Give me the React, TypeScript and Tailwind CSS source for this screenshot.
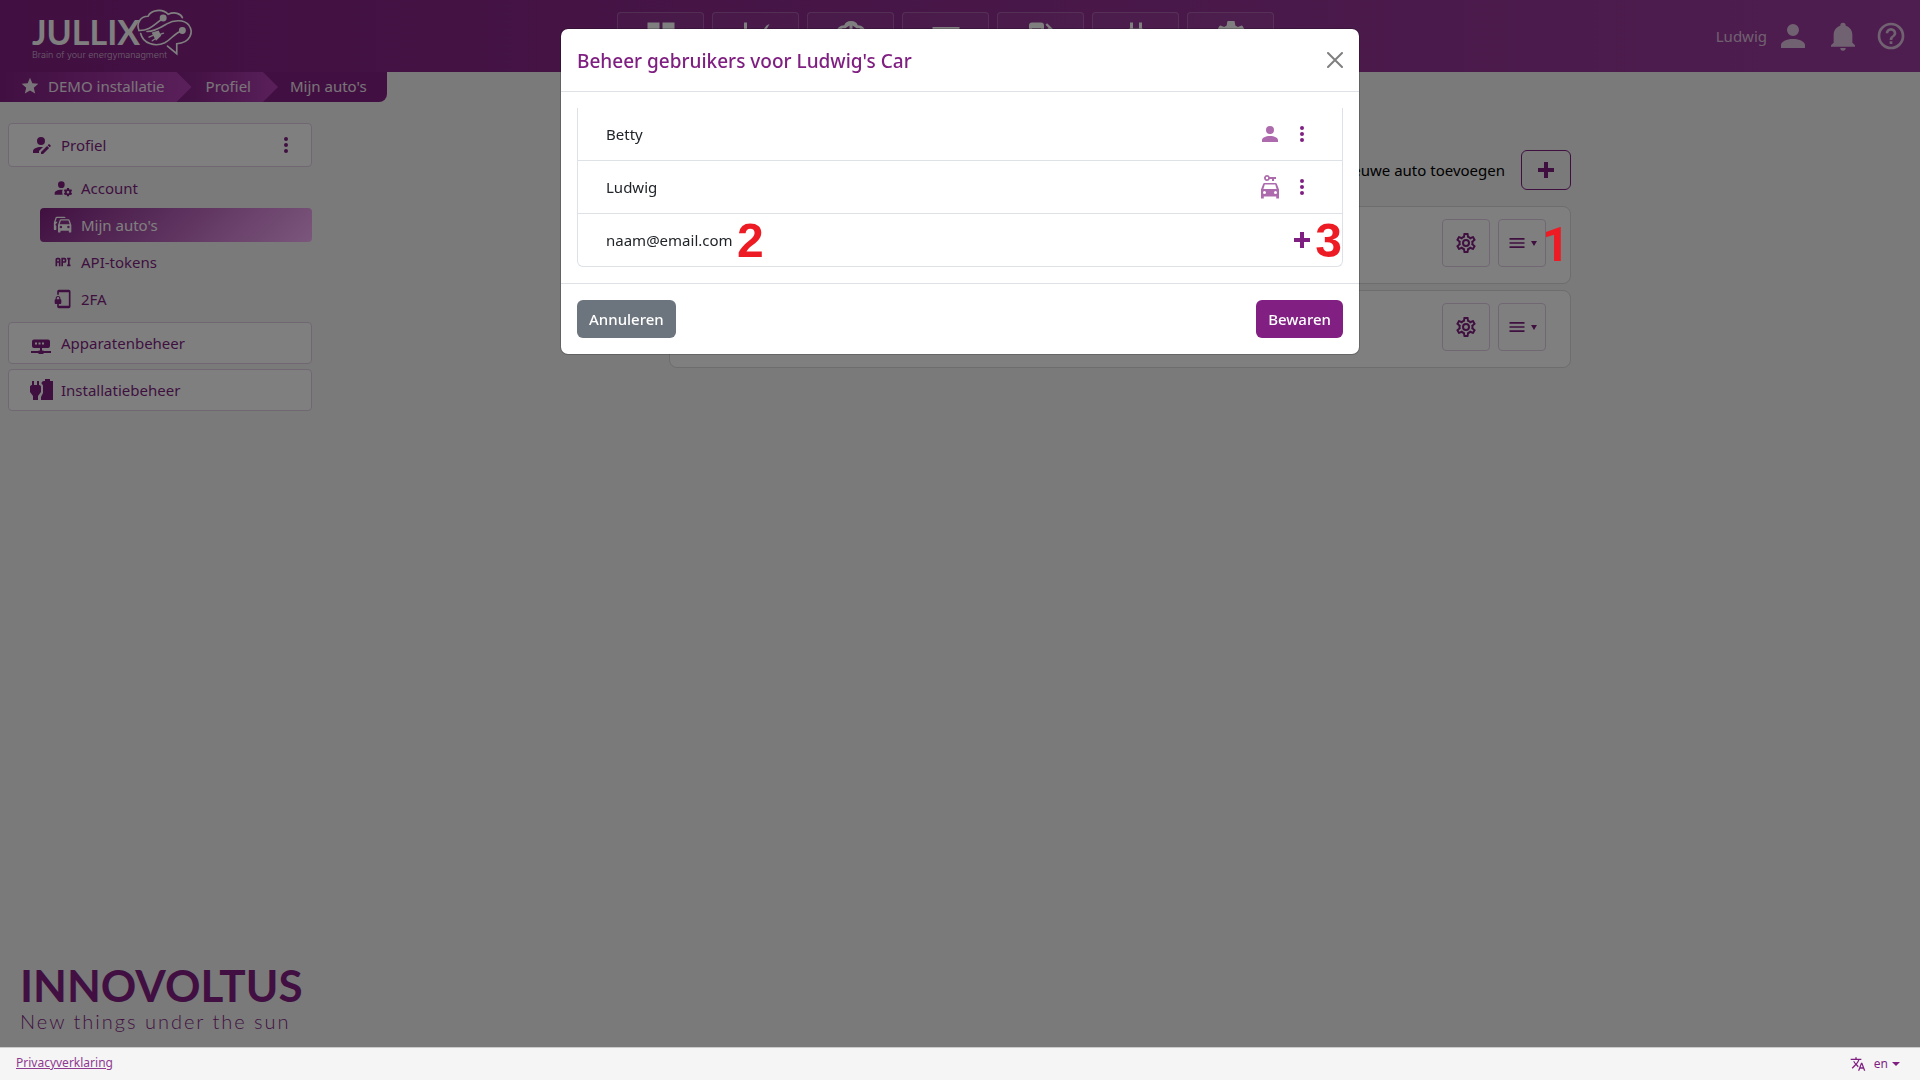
import type { ReactNode } from "react";
import { MdTranslate, MdStar } from "react-icons/md";

const paths = {
  account:
    "M12,4A4,4 0 0,1 16,8A4,4 0 0,1 12,12A4,4 0 0,1 8,8A4,4 0 0,1 12,4M12,14C16.42,14 20,15.79 20,18V20H4V18C4,15.79 7.58,14 12,14Z",
  bell: "M21,19V20H3V19L5,17V11C5,7.9 7.03,5.17 10,4.29C10,4.19 10,4.1 10,4A2,2 0 0,1 12,2A2,2 0 0,1 14,4C14,4.1 14,4.19 14,4.29C16.97,5.17 19,7.9 19,11V17L21,19M14,21A2,2 0 0,1 12,23A2,2 0 0,1 10,21",
  help: "M11,18H13V16H11V18M12,2A10,10 0 0,0 2,12A10,10 0 0,0 12,22A10,10 0 0,0 22,12A10,10 0 0,0 12,2M12,20C7.59,20 4,16.41 4,12C4,7.59 7.59,4 12,4C16.41,4 20,7.59 20,12C20,16.41 16.41,20 12,20M12,6A4,4 0 0,0 8,10H10A2,2 0 0,1 12,8A2,2 0 0,1 14,10C14,12 11,11.75 11,15H13C13,12.75 16,12.5 16,10A4,4 0 0,0 12,6Z",
  cogOutline:
    "M12,8A4,4 0 0,1 16,12A4,4 0 0,1 12,16A4,4 0 0,1 8,12A4,4 0 0,1 12,8M12,10A2,2 0 0,0 10,12A2,2 0 0,0 12,14A2,2 0 0,0 14,12A2,2 0 0,0 12,10M10,22C9.75,22 9.54,21.82 9.5,21.58L9.13,18.93C8.5,18.68 7.96,18.34 7.44,17.94L4.95,18.95C4.73,19.03 4.46,18.95 4.34,18.73L2.34,15.27C2.21,15.05 2.27,14.78 2.46,14.63L4.57,12.97L4.5,12L4.57,11L2.46,9.37C2.27,9.22 2.21,8.95 2.34,8.73L4.34,5.27C4.46,5.05 4.73,4.96 4.95,5.05L7.44,6.05C7.96,5.66 8.5,5.32 9.13,5.07L9.5,2.42C9.54,2.18 9.75,2 10,2H14C14.25,2 14.46,2.18 14.5,2.42L14.87,5.07C15.5,5.32 16.04,5.66 16.56,6.05L19.05,5.05C19.27,4.96 19.54,5.05 19.66,5.27L21.66,8.73C21.79,8.95 21.73,9.22 21.54,9.37L19.43,11L19.5,12L19.43,13L21.54,14.63C21.73,14.78 21.79,15.05 21.66,15.27L19.66,18.73C19.54,18.95 19.27,19.04 19.05,18.95L16.56,17.95C16.04,18.34 15.5,18.68 14.87,18.93L14.5,21.58C14.46,21.82 14.25,22 14,22H10M11.25,4L10.88,6.61C9.68,6.86 8.62,7.5 7.85,8.39L5.44,7.35L4.69,8.65L6.8,10.2C6.4,11.37 6.4,12.64 6.8,13.8L4.68,15.36L5.43,16.66L7.86,15.62C8.63,16.5 9.68,17.14 10.87,17.38L11.24,20H12.76L13.13,17.39C14.32,17.14 15.37,16.5 16.14,15.62L18.57,16.66L19.32,15.36L17.2,13.81C17.6,12.64 17.6,11.37 17.2,10.2L19.31,8.65L18.56,7.35L16.15,8.39C15.38,7.5 14.32,6.86 13.12,6.62L12.75,4H11.25Z",
  cog: "M12,15.5A3.5,3.5 0 0,1 8.5,12A3.5,3.5 0 0,1 12,8.5A3.5,3.5 0 0,1 15.5,12A3.5,3.5 0 0,1 12,15.5M19.43,12.97L21.54,14.63C21.73,14.78 21.79,15.05 21.66,15.27L19.66,18.73C19.54,18.95 19.27,19.04 19.05,18.95L16.56,17.95C16.04,18.34 15.5,18.68 14.87,18.93L14.5,21.58C14.46,21.82 14.25,22 14,22H10C9.75,22 9.54,21.82 9.5,21.58L9.13,18.93C8.5,18.68 7.96,18.34 7.44,17.94L4.95,18.95L4.34,18.73L2.34,15.27L2.46,14.63L4.57,12.97L4.57,11L2.46,9.37L2.34,8.73L4.34,5.27L4.95,5.05L7.44,6.05C7.96,5.66 8.5,5.32 9.13,5.07L9.5,2.42C9.54,2.18 9.75,2 10,2H14C14.25,2 14.46,2.18 14.5,2.42L14.87,5.07C15.5,5.32 16.04,5.66 16.56,6.05L19.05,5.05L19.66,5.27L21.66,8.73L21.54,9.37L19.43,11Z",
  accountEdit:
    "M21.7,13.35L20.7,14.35L18.65,12.3L19.65,11.3C19.86,11.09 20.21,11.09 20.42,11.3L21.7,12.58C21.91,12.79 21.91,13.14 21.7,13.35M12,18.94L18.06,12.88L20.11,14.93L14.06,21H12V18.94M12,14C7.58,14 4,15.79 4,18V20H10V18.11L14,14.11C13.34,14.03 12.67,14 12,14M12,4A4,4 0 0,0 8,8A4,4 0 0,0 12,12A4,4 0 0,0 16,8A4,4 0 0,0 12,4Z",
  accountCog:
    "M10 4A4 4 0 0 0 6 8A4 4 0 0 0 10 12A4 4 0 0 0 14 8A4 4 0 0 0 10 4M17 12C16.87 12 16.76 12.09 16.74 12.21L16.55 13.53C16.25 13.66 15.96 13.82 15.7 14L14.46 13.5C14.35 13.5 14.22 13.5 14.15 13.63L13.15 15.36C13.09 15.47 13.11 15.6 13.21 15.68L14.27 16.5C14.25 16.67 14.24 16.83 14.24 17C14.24 17.17 14.25 17.33 14.27 17.5L13.21 18.32C13.12 18.4 13.09 18.53 13.15 18.64L14.15 20.37C14.21 20.5 14.34 20.5 14.46 20.5L15.7 20C15.96 20.18 16.24 20.35 16.55 20.47L16.74 21.79C16.76 21.91 16.86 22 17 22H19C19.11 22 19.22 21.91 19.24 21.79L19.43 20.47C19.73 20.34 20 20.18 20.27 20L21.5 20.5C21.63 20.5 21.76 20.5 21.83 20.37L22.83 18.64C22.89 18.53 22.86 18.4 22.77 18.32L21.7 17.5C21.72 17.33 21.74 17.17 21.74 17C21.74 16.83 21.73 16.67 21.7 16.5L22.76 15.68C22.85 15.6 22.88 15.47 22.82 15.36L21.82 13.63C21.76 13.5 21.63 13.5 21.5 13.5L20.27 14C20 13.82 19.73 13.65 19.42 13.53L19.23 12.21C19.22 12.09 19.11 12 19 12H17M10 14C5.58 14 2 15.79 2 18V20H11.68A7 7 0 0 1 11 17A7 7 0 0 1 11.64 14.09C11.11 14.03 10.56 14 10 14M18 15.5C18.83 15.5 19.5 16.17 19.5 17C19.5 17.83 18.83 18.5 18 18.5C17.16 18.5 16.5 17.83 16.5 17C16.5 16.17 17.17 15.5 18 15.5Z",
  carMultiple:
    "M8,11L9.5,6.5H18.5L20,11M18.5,16A1.5,1.5 0 0,1 17,14.5A1.5,1.5 0 0,1 18.5,13A1.5,1.5 0 0,1 20,14.5A1.5,1.5 0 0,1 18.5,16M9.5,16A1.5,1.5 0 0,1 8,14.5A1.5,1.5 0 0,1 9.5,13A1.5,1.5 0 0,1 11,14.5A1.5,1.5 0 0,1 9.5,16M19.92,6C19.71,5.4 19.14,5 18.5,5H9.5C8.86,5 8.29,5.4 8.08,6L6,12V20A1,1 0 0,0 7,21H8A1,1 0 0,0 9,20V19H19V20A1,1 0 0,0 20,21H21A1,1 0 0,0 22,20V12L19.92,6M14.92,3C14.71,2.4 14.14,2 13.5,2H4.5C3.86,2 3.29,2.4 3.08,3L1,9V17A1,1 0 0,0 2,18H3A1,1 0 0,0 4,17V12.91C3.22,12.63 2.82,11.77 3.1,11C3.32,10.4 3.87,10 4.5,10H4.57L5.27,8H3L4.5,3.5H15.09L14.92,3Z",
  api: "M7 7H5A2 2 0 0 0 3 9V17H5V13H7V17H9V9A2 2 0 0 0 7 7M7 11H5V9H7M14 7H10V17H12V13H14A2 2 0 0 0 16 11V9A2 2 0 0 0 14 7M14 11H12V9H14M20 9V15H21V17H17V15H18V9H17V7H21V9Z",
  cellphoneLock:
    "M7,1A2,2 0 0,0 5,3V7H7V4H19V20H7V18H5V21A2,2 0 0,0 7,23H19A2,2 0 0,0 21,21V3A2,2 0 0,0 19,1H7M6,8.3C4.6,8.3 3.2,9.4 3.2,10.8V12.2C2.6,12.2 2,12.8 2,13.4V16.9C2,17.5 2.6,18.1 3.2,18.1H8.7C9.4,18.1 10,17.5 10,16.9V13.4C10,12.8 9.4,12.2 8.8,12.2V10.8C8.8,9.4 7.4,8.3 6,8.3M6,9.6C6.8,9.6 7.5,10.1 7.5,10.9V12.2H4.5V10.9C4.5,10.1 5.2,9.6 6,9.6Z",
  routerNetwork:
    "M5 8.5A2 2 0 0 0 3 10.5V15A2 2 0 0 0 5 17H11V19.5H10L9 20H2V22H9L10 23H14L15 22H22V20H15L14 19.5H13V17H19A2 2 0 0 0 21 15V10.5A2 2 0 0 0 19 8.5H5M6 11.5H8V13.5H6V11.5M9.5 11.5H11.5V13.5H9.5V11.5M13 11.5H15V13.5H13V11.5Z",
  plugBattery:
    "M3,3H5V7H8V3H10V7C11.5,7 12,8 12,9V14L9,18V22H4V18L1,14V9C1,8 1.5,7 3,7V3M15,3H16V1H21V3H24V22H12V19L14,15V8C14,7 13,6 12.5,5.5C12.5,4 13.5,3 15,3Z",
  carKey:
    "M9 0A3 3 0 0 0 6.2 2A3 3 0 0 0 9 6A3 3 0 0 0 11.8 4H14V6H16V4H18V2H11.8A3 3 0 0 0 9 0M9 1.8A1.2 1.2 0 0 1 9 4.2A1.2 1.2 0 0 1 9 1.8M18.9 9C18.7 8.4 18.2 8 17.5 8H6.5C5.8 8 5.3 8.4 5.1 9L3 14.5V23.4H5.8V21.5H18.2V23.4H21V14.5L18.9 9M6.8 9.5H17.2L18.6 14H5.4L6.8 9.5M6.5 19A1.5 1.5 0 0 1 6.5 16A1.5 1.5 0 0 1 6.5 19M17.5 19A1.5 1.5 0 0 1 17.5 16A1.5 1.5 0 0 1 17.5 19Z",
  dots: "M12,16A2,2 0 0,1 14,18A2,2 0 0,1 12,20A2,2 0 0,1 10,18A2,2 0 0,1 12,16M12,10A2,2 0 0,1 14,12A2,2 0 0,1 12,14A2,2 0 0,1 10,12A2,2 0 0,1 12,10M12,4A2,2 0 0,1 14,6A2,2 0 0,1 12,8A2,2 0 0,1 10,6A2,2 0 0,1 12,4Z",
  plus: "M20 14H14V20H10V14H4V10H10V4H14V10H20V14Z",
  menu: "M3,6H21V8H3V6M3,11H21V13H3V11M3,16H21V18H3V16Z",
  dashboard: "M13,3V9H21V3M13,21H21V11H13M3,21H11V15H3M3,13H11V3H3V13Z",
  chart: "M4 3H6V19H21V21H4V3M8 17V11H11V17H8M19 5L21 4L15 15L13 13Z",
  brain:
    "M12 2C9.5 2 8 3.3 7.5 4.8C4.5 4.8 2.5 6.8 2.5 9.3C0.5 12 2 16.5 6 17C7.5 20 11 20.5 12 18C13 20.5 16.5 20 18 17C22 16.5 23.5 12 21.5 9.3C21.5 6.8 19.5 4.8 16.5 4.8C16 3.3 14.5 2 12 2M11 5V16.5C9 17.5 8 16 7.5 15C4 15 3 12 4.8 10C4.5 8 6 6.5 8 7L11 5M13 5L16 7C18 6.5 19.5 8 19.2 10C21 12 20 15 16.5 15C16 16 15 17.5 13 16.5V5Z",
  card: "M3 6H21V18H3V6Z",
  gas: "M18,10A1,1 0 0,1 17,9A1,1 0 0,1 18,8A1,1 0 0,1 19,9A1,1 0 0,1 18,10M12,10H6V7H12M19.77,7.23L19.78,7.22L16.06,3.5L15,4.56L17.11,6.67C16.17,7 15.5,7.93 15.5,9A2.5,2.5 0 0,0 18,11.5V18.5H16.5V14A2,2 0 0,0 14,12H14V5A2,2 0 0,0 12,3H6A2,2 0 0,0 4,5V21H14V13.5V18.5A2.5,2.5 0 0,0 20.5,18.5V9C20.5,8.31 20.22,7.68 19.77,7.23Z",
  plug: "M16,7V3H14V7H10V3H8V7C7,7 6,8 6,9V14.5L9.5,18V21H14.5V18L18,14.5V9C18,8 17,7 16,7Z",
};

type IconName = keyof typeof paths;

function Icon({ name, className }: { name: IconName; className?: string }) {
  return (
    <svg viewBox="0 0 24 24" fill="currentColor" fillRule="evenodd" aria-hidden="true" className={className}>
      <path d={paths[name]} />
    </svg>
  );
}

const navItems: { icon: IconName; label: string }[] = [
  { icon: "dashboard", label: "Dashboard" },
  { icon: "chart", label: "Grafieken" },
  { icon: "brain", label: "Algoritme" },
  { icon: "card", label: "Tarieven" },
  { icon: "gas", label: "Laden" },
  { icon: "plug", label: "Stekkers" },
  { icon: "cog", label: "Instellingen" },
];

const profileItems: { icon: IconName; label: string; active?: boolean }[] = [
  { icon: "accountCog", label: "Account" },
  { icon: "carMultiple", label: "Mijn auto's", active: true },
  { icon: "api", label: "API-tokens" },
  { icon: "cellphoneLock", label: "2FA" },
];

const users: { name: string; icon: IconName }[] = [
  { name: "Betty", icon: "account" },
  { name: "Ludwig", icon: "carKey" },
];

function Logo() {
  return (
    <a href="#" className="relative flex w-[162px] text-white">
      <span>
        <span className="block h-9 font-['Lato'] text-[34px] leading-9 font-bold">JULLIX</span>
        <span className="block font-['Inter'] text-[9px] leading-[10px] font-light whitespace-nowrap text-white/70">
          Brain of your energymanagment
        </span>
      </span>
      <svg
        viewBox="405 25 175 145"
        fill="none"
        stroke="currentColor"
        strokeWidth="5"
        strokeLinecap="round"
        className="absolute -top-[6px] right-0 h-12 w-[58px]"
        aria-hidden="true"
      >
        <path d="M414 93C405 72 418 50 441 50C450 31 484 25 502 44C522 35 540 42 545 54" />
        <path d="M414 93C450 94 462 70 487 57" />
        <path d="M438 96C462 96 480 84 498 73C520 60 550 60 564 76C580 98 570 130 528 133V163L500 140" />
        <path d="M419 102C426 132 462 144 492 130C514 118 520 100 545 94" />
        <circle cx="487" cy="55" r="8" fill="currentColor" />
        <circle cx="545" cy="93" r="8" fill="currentColor" />
        <path d="M456 101L472 96L478 108L466 120Z" fill="currentColor" />
        <path d="M456 108L444 113M463 118L454 124M474 106L488 101" strokeWidth="4" />
      </svg>
    </a>
  );
}

function Header() {
  return (
    <header className="flex h-[72px] items-start bg-gradient-to-r from-[#821f82] to-[#9e3ca0] text-white">
      <div className="flex-1 pt-[14px] pl-8">
        <Logo />
      </div>
      <nav className="flex gap-2 pt-3 pr-12">
        {navItems.map((item) => (
          <button
            key={item.label}
            aria-label={item.label}
            className="flex h-12 w-[87px] items-center justify-center rounded-sm border border-white/20 bg-white/5"
          >
            <Icon name={item.icon} className="size-9" />
          </button>
        ))}
      </nav>
      <div className="flex flex-1 items-center justify-end gap-4 pt-[18px] pr-[13px] text-white/70">
        <a href="#" className="flex items-center gap-2">
          Ludwig
          <Icon name="account" className="size-9" />
        </a>
        <button aria-label="Meldingen">
          <Icon name="bell" className="size-8" />
        </button>
        <button aria-label="Help">
          <Icon name="help" className="size-8" />
        </button>
      </div>
    </header>
  );
}

function Breadcrumb() {
  return (
    <nav className="flex h-[30px] w-max items-stretch overflow-hidden rounded-br-lg bg-[#821f82] text-white/90">
      <a
        href="#"
        className="z-20 flex items-center gap-2 bg-gradient-to-r from-[#821f82] to-[#b440b6] pr-[27px] pb-[2px] pl-5 [clip-path:polygon(0_0,calc(100%-15px)_0,100%_50%,calc(100%-15px)_100%,0_100%)]"
      >
        <MdStar className="size-5" />
        DEMO installatie
      </a>
      <a
        href="#"
        className="z-10 -ml-4 flex items-center bg-gradient-to-r from-[#821f82] to-[#b440b6] pr-[27px] pb-[2px] pl-[30px] [clip-path:polygon(0_0,calc(100%-15px)_0,100%_50%,calc(100%-15px)_100%,0_100%)]"
      >
        Profiel
      </a>
      <span className="flex items-center pr-5 pb-[2px] pl-3">Mijn auto's</span>
    </nav>
  );
}

function SidebarCard({ icon, children }: { icon: IconName; children: ReactNode }) {
  return (
    <div className="flex h-[42px] items-center gap-2 rounded-sm border border-[#e3cfe4] bg-white pr-4 pl-5">
      <Icon name={icon} className="size-6" />
      {children}
    </div>
  );
}

function Sidebar() {
  return (
    <aside className="px-2 pt-[21px] text-[#7f1f81]">
      <div className="flex h-11 items-center gap-2 rounded-sm border border-[#e3cfe4] bg-white pr-[13px] pl-5">
        <Icon name="accountEdit" className="size-6" />
        <a href="#" className="flex-1">
          Profiel
        </a>
        <button aria-label="Profielmenu">
          <Icon name="dots" className="size-6" />
        </button>
      </div>
      <ul className="mt-1 mb-[6px] ml-8 flex flex-col gap-[3px]">
        {profileItems.map((item) => (
          <li key={item.label}>
            <a
              href="#"
              className={`flex h-[34px] items-center gap-2 rounded-sm pl-[13px] ${
                item.active ? "bg-[linear-gradient(135deg,#7f1f81,#f8aefa)] text-white" : ""
              }`}
            >
              <Icon name={item.icon} className="size-5" />
              {item.label}
            </a>
          </li>
        ))}
      </ul>
      <div className="flex flex-col gap-[5px]">
        <SidebarCard icon="routerNetwork">
          <a href="#">Apparatenbeheer</a>
        </SidebarCard>
        <SidebarCard icon="plugBattery">
          <a href="#">Installatiebeheer</a>
        </SidebarCard>
      </div>
    </aside>
  );
}

function CarCard({ marker }: { marker?: string }) {
  return (
    <div className="flex justify-end gap-2 rounded-lg border border-[#dadada] bg-white pt-3 pr-6 pb-4">
      <button
        aria-label="Instellingen"
        className="flex size-12 items-center justify-center rounded-sm border border-[#e3cfe4]"
      >
        <Icon name="cogOutline" className="size-6" />
      </button>
      <div className="relative">
        <button
          aria-label="Menu"
          className="flex size-12 items-center justify-center gap-1 rounded-sm border border-[#e3cfe4]"
        >
          <Icon name="menu" className="size-5" />
          <svg viewBox="0 0 6 5" className="h-[5px] w-[6px]" fill="currentColor" aria-hidden="true">
            <path d="M0 0H6L3 5Z" />
          </svg>
        </button>
        {marker && <Marker className="top-[2px] left-11 font-['Roboto']">{marker}</Marker>}
      </div>
    </div>
  );
}

function Marker({ className, children }: { className: string; children: ReactNode }) {
  return (
    <span className={`absolute z-30 text-5xl leading-none font-bold text-[#ed1c24] ${className}`}>
      {children}
    </span>
  );
}

function Dialog() {
  return (
    <div
      role="dialog"
      aria-labelledby="dialog-title"
      className="mx-auto mt-7 w-full max-w-[800px] overflow-hidden rounded-lg border border-black/20 bg-white bg-clip-padding"
    >
      <div className="flex h-[63px] items-center justify-between border-b border-[#dee2e6] px-4">
        <h5 id="dialog-title" className="pt-[2px] text-[19px] font-medium text-[#7f1f81]">
          Beheer gebruikers voor Ludwig's Car
        </h5>
        <button aria-label="Sluiten" className="text-black/50">
          <svg viewBox="0 0 16 16" className="size-4" stroke="currentColor" strokeWidth="2" strokeLinecap="round" aria-hidden="true">
            <path d="M1 1L15 15M15 1L1 15" />
          </svg>
        </button>
      </div>
      <div className="p-4">
        <ul className="rounded-b-md border-x border-b border-[#dee2e6] text-[#212529]">
          {users.map((user) => (
            <li key={user.name} className="flex h-[53px] items-center gap-2 border-b border-[#dee2e6] px-7">
              <span className="flex-1">{user.name}</span>
              <Icon name={user.icon} className="size-6 text-[#ad6bae]" />
              <button aria-label={`Menu ${user.name}`} className="text-[#7f1f81]">
                <Icon name="dots" className="size-6" />
              </button>
            </li>
          ))}
          <li className="relative flex h-[52px] items-center px-7">
            <input
              type="email"
              aria-label="E-mail"
              defaultValue="naam@email.com"
              className="min-w-0 flex-1 outline-none"
            />
            <button aria-label="Gebruiker toevoegen" className="text-[#7f1f81]">
              <Icon name="plus" className="size-6" />
            </button>
            <Marker className="top-[3px] left-[159px] font-['Liberation_Sans']">2</Marker>
            <Marker className="top-[3px] right-0 font-['Liberation_Sans']">3</Marker>
          </li>
        </ul>
      </div>
      <div className="flex justify-between border-t border-[#dee2e6] p-4 font-medium text-white">
        <button className="h-[38px] rounded-md bg-[#6c757d] px-3">Annuleren</button>
        <button className="h-[38px] rounded-md bg-[#811f82] px-3">Bewaren</button>
      </div>
    </div>
  );
}

export default function App() {
  return (
    <div className="flex min-h-screen flex-col bg-[#f4f4f4] font-['Noto_Sans',sans-serif] text-[15px] leading-6">
      <Header />
      <div className="flex flex-1">
        <div className="flex w-80 flex-col">
          <Breadcrumb />
          <Sidebar />
          <div className="mt-auto mb-[14px] ml-5 text-[#821f82]">
            <div className="font-['Lato'] text-[44px] leading-[48px] font-bold">INNOVOLTUS</div>
            <div className="font-['Lato'] text-xl leading-6 font-light tracking-widest">New things under the sun</div>
          </div>
        </div>
        <main className="flex-1 pt-[78px]">
          <div className="mx-auto max-w-[902px] text-[#7f1f81]">
            <div className="mb-4 flex items-center justify-end gap-4">
              <span className="text-black">Nieuwe auto toevoegen</span>
              <button
                aria-label="Auto toevoegen"
                className="flex h-10 w-[50px] items-center justify-center rounded-md border border-[#7f1f81]"
              >
                <Icon name="plus" className="size-6" />
              </button>
            </div>
            <div className="flex flex-col gap-[6px]">
              <CarCard marker="1" />
              <CarCard />
            </div>
          </div>
        </main>
      </div>
      <footer className="z-40 flex h-[33px] items-center justify-between border-t border-[#ccc] bg-[#f5f5f5] px-4 text-xs text-[#7f1f81]">
        <a href="#" className="pb-[2px] text-[#8f3a91] underline">
          Privacyverklaring
        </a>
        <button className="flex items-center gap-2 pr-1">
          <MdTranslate className="size-4" />
          <span className="flex items-center gap-1">
            en
            <svg viewBox="0 0 8 4" className="h-1 w-2" fill="currentColor" aria-hidden="true">
              <path d="M0 0H8L4 4Z" />
            </svg>
          </span>
        </button>
      </footer>
      <div className="fixed inset-0 z-20 bg-black/50">
        <Dialog />
      </div>
    </div>
  );
}
